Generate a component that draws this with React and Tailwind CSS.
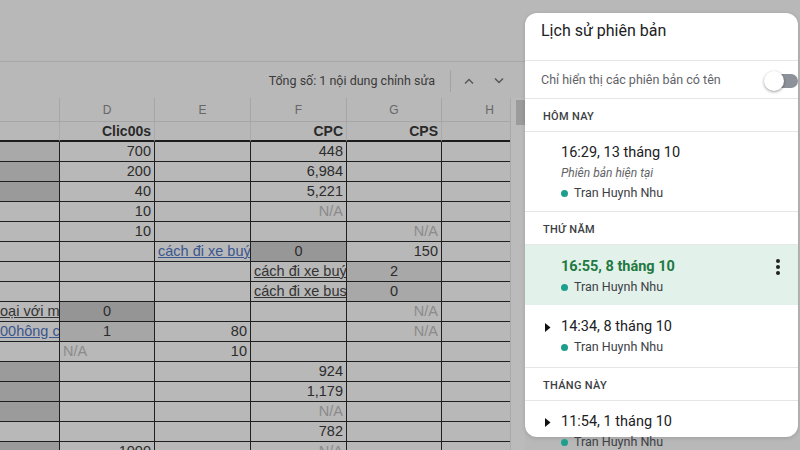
import React from 'react';

const COLS = [60, 95, 96, 96, 95, 96];
const HEADS = ['', 'D', 'E', 'F', 'G', 'H'];

// [C, D, E, F, G, H]
const ROWS = [
    [{ bg: 'bg-[#a9a9a9]' }, { t: '700' }, null, { t: '448' }, null, null],
    [{ bg: 'bg-[#9e9e9e]' }, { t: '200' }, null, { t: '6,984' }, null, null],
    [{ bg: 'bg-[#9a9a9a]' }, { t: '40' }, null, { t: '5,221' }, null, null],
    [null, { t: '10' }, null, { t: 'N/A', k: 'na' }, null, null],
    [null, { t: '10' }, null, null, { t: 'N/A', k: 'na' }, null],
    [null, null, { t: 'cách đi xe buýt', k: 'link', a: 'l' }, { t: '0', a: 'c', bg: 'bg-[#979797]' }, { t: '150' }, null],
    [null, null, null, { t: 'cách đi xe buýt', k: 'ul', a: 'l' }, { t: '2', a: 'c', bg: 'bg-[#a8a8a8]' }, null],
    [null, null, null, { t: 'cách đi xe bus', k: 'ul', a: 'l' }, { t: '0', a: 'c', bg: 'bg-[#a8a8a8]' }, null],
    [{ t: 'oại với mạng', k: 'ul', a: 'cut' }, { t: '0', a: 'c', bg: 'bg-[#959595]' }, null, null, { t: 'N/A', k: 'na' }, null],
    [{ t: '00hông cáp', k: 'link', a: 'cut' }, { t: '1', a: 'c', bg: 'bg-[#a6a6a6]' }, { t: '80' }, null, { t: 'N/A', k: 'na' }, null],
    [null, { t: 'N/A', k: 'na', a: 'l' }, { t: '10' }, null, null, null],
    [{ bg: 'bg-[#9b9b9b]' }, null, null, { t: '924' }, null, null],
    [{ bg: 'bg-[#9b9b9b]' }, null, null, { t: '1,179' }, null, null],
    [{ bg: 'bg-[#9b9b9b]' }, null, null, { t: 'N/A', k: 'na' }, null, null],
    [null, null, null, { t: '782' }, null, null],
    [{ bg: 'bg-[#9b9b9b]' }, { t: '1000' }, null, { t: 'N/A', k: 'na' }, null, null],
];

const Cell = ({ cell, width }) => {
    const c = cell || {};
    const align = c.a === 'c' ? 'justify-center' : c.a === 'l' || c.a === 'cut' ? 'justify-start' : 'justify-end';
    const color =
        c.k === 'na'
            ? 'text-[#8b8b8b]'
            : c.k === 'link'
              ? 'text-[#3a568e] underline'
              : c.k === 'ul'
                ? 'text-[#333333] underline'
                : 'text-[#2c2c2c]';
    return (
        <div
            style={{ width }}
            className={`flex h-full shrink-0 items-center overflow-hidden whitespace-nowrap border-r border-b border-[#1f1f1f] ${
                c.a === 'cut' ? 'px-0' : 'px-[3px]'
            } ${align} ${c.bg || ''}`}
        >
            {c.t && <span className={`text-[14.5px] leading-[19px] ${color}`}>{c.t}</span>}
        </div>
    );
};

const Sheet = () => (
    <div className="flex min-h-0 flex-1">
        <div className="w-[510px] shrink-0 overflow-hidden font-['Liberation_Sans',Arial,sans-serif]">
            <div className="flex h-[24px]">
                {COLS.map((w, i) => (
                    <div
                        key={i}
                        style={{ width: w }}
                        className="flex h-full shrink-0 items-center justify-center border-r border-b border-[#a6a6a6] text-[12px] text-[#676767]"
                    >
                        {HEADS[i]}
                    </div>
                ))}
            </div>
            <div className="flex h-[20px]">
                {COLS.map((w, i) => (
                    <div
                        key={i}
                        style={{ width: w }}
                        className="flex h-full shrink-0 items-center justify-end border-r border-b-2 border-r-[#aaaaaa] border-b-[#1c1c1c] px-[3px] text-[14px] font-bold text-[#2a2a2a]"
                    >
                        {i === 1 ? 'Clic00s' : i === 3 ? 'CPC' : i === 4 ? 'CPS' : ''}
                    </div>
                ))}
            </div>
            {ROWS.map((row, r) => (
                <div key={r} className="flex h-[20px]">
                    {row.map((cell, i) => (
                        <Cell key={i} cell={cell} width={COLS[i]} />
                    ))}
                </div>
            ))}
        </div>
        <div className="w-[15px] shrink-0 border-l border-[#a9a9a9] bg-[#bbbbbb] pt-[2px] pl-[5px]">
            <div className="h-[25px] w-[9px] bg-[#9b9b9b]" />
        </div>
    </div>
);

const Chevron = ({ up }) => (
    <svg width="10" height="6" viewBox="0 0 10 6" fill="none" stroke="#555555" strokeWidth="1.4">
        <path d={up ? 'M1 5.5l4-4 4 4' : 'M1 0.5l4 4 4-4'} />
    </svg>
);

const Dot = () => <span className="mr-[6px] inline-block h-[7px] w-[7px] rounded-full bg-[#1e9f8e]" />;

const Caret = () => (
    <svg width="6" height="9" viewBox="0 0 6 9">
        <path d="M0 0l5.5 4.5L0 9z" fill="#111" />
    </svg>
);

const Section = ({ label }) => (
    <div className="flex h-[33px] items-center border-b border-[#e6e6e6] pt-[4px] pl-[18px] text-[11px] font-medium tracking-[0.3px] text-[#3c4043]">
        {label}
    </div>
);

const Version = ({ time, sub, caret, selected, height, pt, border = true }) => (
    <div
        style={{ height }}
        className={`relative flex ${selected ? 'bg-[#e3f1eb]' : ''} ${border ? 'border-b border-[#e6e6e6]' : ''}`}
    >
        <div className="w-[36px] shrink-0 pl-[20px]" style={{ paddingTop: pt + 6 }}>
            {caret && <Caret />}
        </div>
        <div className="flex-1" style={{ paddingTop: pt }}>
            <div
                className={`text-[14.5px] leading-[20px] ${
                    selected ? 'font-bold text-[#1f7a42]' : 'text-[#202124]'
                }`}
            >
                {time}
            </div>
            {sub && <div className="text-[12px] italic leading-[20px] text-[#5f6368]">{sub}</div>}
            <div className="flex items-center text-[12.5px] leading-[20px] text-[#3c4043]">
                <Dot />
                Tran Huynh Nhu
            </div>
        </div>
        {selected && (
            <div className="pt-[14px] pr-[18px]">
                <svg width="4" height="16" viewBox="0 0 4 16" fill="#202124">
                    <circle cx="2" cy="2" r="2" />
                    <circle cx="2" cy="8" r="2" />
                    <circle cx="2" cy="14" r="2" />
                </svg>
            </div>
        )}
    </div>
);

const HistoryPanel = () => (
    <div className="pt-[13px]">
        <div className="h-[424px] w-[273px] rounded-[12px] bg-white font-['Roboto',sans-serif] shadow-[0_1px_4px_rgba(0,0,0,0.15)]">
            <div className="h-[48px] border-b border-[#e6e6e6] pt-[8px] pl-[16px] text-[16px] leading-[20px] text-[#202124]">
                Lịch sử phiên bản
            </div>
            <div className="flex h-[38px] items-center justify-between border-b border-[#e6e6e6] pt-[2px] pl-[16px]">
                <span className="text-[12.5px] text-[#5f6368]">Chỉ hiển thị các phiên bản có tên</span>
                <div className="relative h-[20px] w-[34px]">
                    <div className="absolute top-[3px] right-0 h-[14px] w-[30px] rounded-full bg-[#8d9199]" />
                    <div className="absolute top-0 left-0 h-[20px] w-[20px] rounded-full bg-white shadow-[0_1px_3px_rgba(0,0,0,0.4)]" />
                </div>
            </div>
            <Section label="HÔM NAY" />
            <Version time="16:29, 13 tháng 10" sub="Phiên bản hiện tại" height={80} pt={11} />
            <Section label="THỨ NĂM" />
            <Version time="16:55, 8 tháng 10" selected height={60} pt={12} border={false} />
            <Version time="14:34, 8 tháng 10" caret height={63} pt={12} />
            <Section label="THÁNG NÀY" />
            <Version time="11:54, 1 tháng 10" caret height={60} pt={11} border={false} />
        </div>
    </div>
);

export default function App() {
    return (
        <div className="flex h-[450px] w-[800px] overflow-hidden bg-[#b8b8b8]">
            <div className="flex w-[525px] shrink-0 flex-col">
                <div className="h-[62px] shrink-0 border-b border-[#a8a8a8]" />
                <div className="flex h-[36px] shrink-0 items-center justify-end pt-[2px] pr-[21px] font-['Roboto',sans-serif]">
                    <span className="text-[12.5px] text-[#3a3a3a]">Tổng số: 1 nội dung chỉnh sửa</span>
                    <span className="ml-[15px] h-[22px] w-[1px] bg-[#a3a3a3]" />
                    <span className="ml-[13px] flex">
                        <Chevron up />
                    </span>
                    <span className="ml-[20px] flex">
                        <Chevron />
                    </span>
                </div>
                <Sheet />
            </div>
            <HistoryPanel />
        </div>
    );
}
